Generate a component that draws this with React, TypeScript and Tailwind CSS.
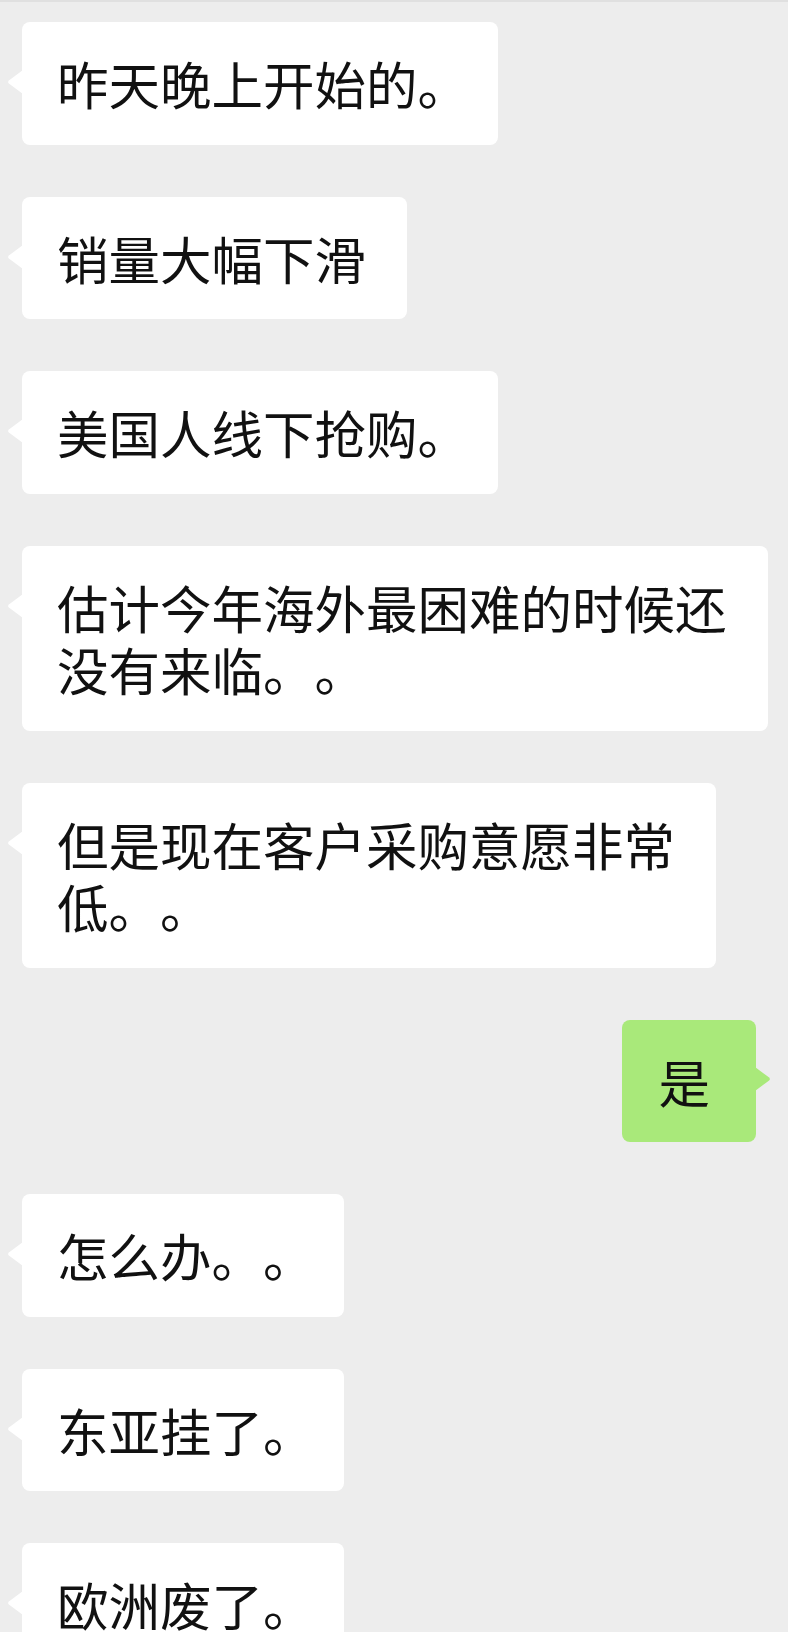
import React from "react";

type Msg = { side: "left" | "right"; lines: string[] };

const messages: Msg[] = [
  { side: "left", lines: ["昨天晚上开始的。"] },
  { side: "left", lines: ["销量大幅下滑"] },
  { side: "left", lines: ["美国人线下抢购。"] },
  { side: "left", lines: ["估计今年海外最困难的时候还", "没有来临。。"] },
  { side: "left", lines: ["但是现在客户采购意愿非常", "低。。"] },
  { side: "right", lines: ["是"] },
  { side: "left", lines: ["怎么办。。"] },
  { side: "left", lines: ["东亚挂了。"] },
  { side: "left", lines: ["欧洲废了。"] },
];

// trailing 。 sits tighter against the bubble edge in the screenshot
const Line = ({ text }: { text: string }) => {
  if (text.endsWith("。")) {
    return (
      <>
        {text.slice(0, -1)}
        <span className="tracking-[-12px]">。</span>
      </>
    );
  }
  return <>{text}</>;
};

const Bubble = ({ msg }: { msg: Msg }) => {
  const left = msg.side === "left";
  return (
    <div
      className={
        left
          ? "relative self-start ml-[22px] rounded-[8px] bg-white pl-[35px] pr-[41px] py-[30px]"
          : "relative self-end mr-[32px] rounded-[8px] bg-[#a9e97a] pl-[36px] pr-[46px] py-[30px]"
      }
    >
      <svg
        width="16"
        height="24"
        viewBox="0 0 16 24"
        className={
          left
            ? "absolute left-[-15px] top-[48px]"
            : "absolute right-[-15px] top-[47px] scale-x-[-1]"
        }
      >
        <path
          d="M16 0 L2.2 10.2 Q0 12 2.2 13.8 L16 24 Z"
          fill={left ? "#ffffff" : "#a9e97a"}
        />
      </svg>
      <div className="whitespace-nowrap text-[51.5px] leading-[62.5px] text-[#111111] [text-spacing-trim:space-all] [font-feature-settings:'chws'_0,'halt'_0]">
        {msg.lines.map((l, i) => (
          <div key={i}>
            <Line text={l} />
          </div>
        ))}
      </div>
    </div>
  );
};

export default function App() {
  return (
    <div
      className="h-[1632px] w-full overflow-hidden border-t-2 border-[#e0e0e0] bg-[#ededed]"
      style={{ fontFamily: '"Noto Sans CJK SC", "Noto Sans", sans-serif' }}
    >
      <div className="flex flex-col gap-[52px] pt-[20px]">
        {messages.map((m, i) => (
          <Bubble key={i} msg={m} />
        ))}
      </div>
    </div>
  );
}
